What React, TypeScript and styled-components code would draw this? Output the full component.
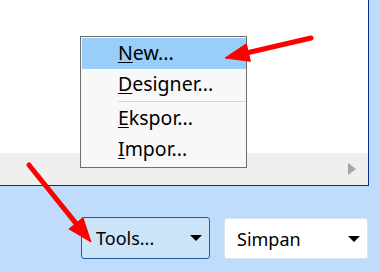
import React from "react";
import styled, { createGlobalStyle } from "styled-components";

const GlobalStyle = createGlobalStyle`
  html, body {
    margin: 0;
    padding: 0;
    background: #bfdcfc;
    font-family: "Noto Sans", "Open Sans", sans-serif;
  }
`;

const Page = styled.div`
  position: relative;
  width: 380px;
  height: 272px;
  overflow: hidden;
`;

const Window = styled.div`
  width: 368px;
  height: 185px;
  display: flex;
  flex-direction: column;
  border-right: 1px solid #0c2d96;
  border-bottom: 1px solid #0c2d96;
`;

const Content = styled.div`
  flex: 1;
  background: #ffffff;
`;

const HScroll = styled.div`
  height: 32px;
  background: #efefef;
  display: flex;
  align-items: center;
  justify-content: flex-end;
  padding-right: 12px;
`;

const ScrollArrow = styled.div`
  width: 0;
  height: 0;
  border-top: 6px solid transparent;
  border-bottom: 6px solid transparent;
  border-left: 8px solid #a6a6a6;
`;

const ButtonRow = styled.div`
  display: flex;
  align-items: flex-start;
  gap: 14px;
  padding: 31px 0 0 81px;
`;

const DropButton = styled.div<{ $active?: boolean; $width: number }>`
  box-sizing: border-box;
  width: ${(p) => p.$width}px;
  height: ${(p) => (p.$active ? 42 : 41)}px;
  margin-top: ${(p) => (p.$active ? 0 : 1)}px;
  display: flex;
  align-items: center;
  justify-content: space-between;
  padding: 0 7px 0 ${(p) => (p.$active ? 14 : 12)}px;
  border-radius: 3px;
  background: ${(p) => (p.$active ? "#cce4f7" : "#ffffff")};
  border: 1px solid ${(p) => (p.$active ? "#1a5ea6" : "#d9e4ef")};
  font-size: 18px;
  color: #000;
`;

const Caret = styled.span`
  width: 0;
  height: 0;
  border-left: 6px solid transparent;
  border-right: 6px solid transparent;
  border-top: 6px solid #000;
`;

const Menu = styled.div`
  position: absolute;
  left: 80px;
  top: 36px;
  width: 164px;
  padding: 1px 0 2px 1px;
  background: #f8f8f8;
  border: 1px solid #6e6e6e;
`;

const MenuItem = styled.div<{ $hover?: boolean }>`
  height: 31px;
  line-height: 30px;
  padding-left: 36px;
  font-size: 19.5px;
  color: #000;
  background: ${(p) => (p.$hover ? "#99cdfa" : "transparent")};

  u {
    text-decoration: underline;
    text-underline-offset: 2px;
    text-decoration-thickness: 1px;
  }
`;

const Separator = styled.div`
  height: 1px;
  margin: 1px 0 1px 36px;
  background: #d6d6d6;
`;

const Overlay = styled.svg`
  position: absolute;
  left: 0;
  top: 0;
  pointer-events: none;
`;

const arrow = (x1: number, y1: number, x2: number, y2: number) => {
  const dx = x2 - x1;
  const dy = y2 - y1;
  const len = Math.hypot(dx, dy);
  const ux = dx / len;
  const uy = dy / len;
  const nx = -uy;
  const ny = ux;
  const headLen = 24;
  const headW = 9;
  const bx = x2 - ux * headLen;
  const by = y2 - uy * headLen;
  return {
    line: `M${x1} ${y1} L${bx + ux * 2} ${by + uy * 2}`,
    head: `${x2},${y2} ${bx + nx * headW},${by + ny * headW} ${bx - nx * headW},${by - ny * headW}`,
  };
};

const items = [
  { key: "N", rest: "ew...", hover: true },
  { key: "D", rest: "esigner..." },
  { sep: true },
  { key: "E", rest: "kspor..." },
  { key: "I", rest: "mpor..." },
];

const App: React.FC = () => {
  const a1 = arrow(311, 38, 225, 58);
  const a2 = arrow(29, 165, 91, 242);

  return (
    <Page>
      <GlobalStyle />
      <Window>
        <Content />
        <HScroll>
          <ScrollArrow />
        </HScroll>
      </Window>
      <ButtonRow>
        <DropButton $active $width={129}>
          Tools...
          <Caret />
        </DropButton>
        <DropButton $width={144}>
          Simpan
          <Caret />
        </DropButton>
      </ButtonRow>
      <Menu>
        {items.map((it, i) =>
          it.sep ? (
            <Separator key={i} />
          ) : (
            <MenuItem key={i} $hover={it.hover}>
              <u>{it.key}</u>
              {it.rest}
            </MenuItem>
          )
        )}
      </Menu>
      <Overlay width={380} height={272} viewBox="0 0 380 272">
        {[a1, a2].map((a, i) => (
          <g key={i} fill="#ff0000" stroke="#ff0000">
            <path d={a.line} strokeWidth={5} strokeLinecap="round" fill="none" />
            <polygon points={a.head} strokeWidth={1} strokeLinejoin="round" />
          </g>
        ))}
      </Overlay>
    </Page>
  );
};

export default App;
